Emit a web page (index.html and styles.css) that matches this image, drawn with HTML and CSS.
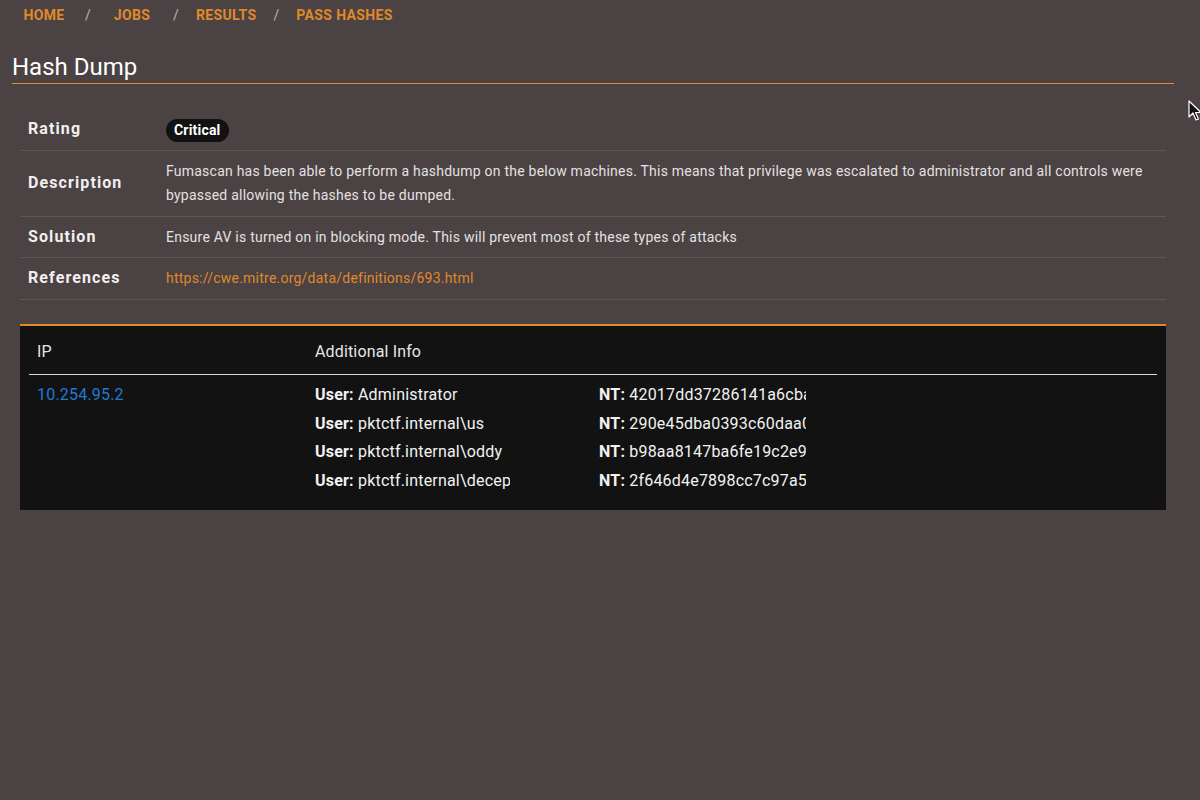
FILE: index.html
```html
<!DOCTYPE html>
<html lang="en">
<head>
    <meta charset="UTF-8">
    <title>Hash Dump - Results</title>
    <link rel="stylesheet" href="styles.css">
</head>
<body>
    <nav class="breadcrumbs">
        <a href="#" class="crumb">Home</a>
        <span class="sep">/</span>
        <a href="#" class="crumb">Jobs</a>
        <span class="sep">/</span>
        <a href="#" class="crumb">Results</a>
        <span class="sep">/</span>
        <a href="#" class="crumb">Pass Hashes</a>
    </nav>

    <div class="container">
        <h1 class="title">Hash Dump</h1>

        <!-- Finding details -->
        <table class="details">
            <tr>
                <th>Rating</th>
                <td><span class="badge">Critical</span></td>
            </tr>
            <tr>
                <th>Description</th>
                <td>Fumascan has been able to perform a hashdump on the below machines. This means that privilege was escalated to administrator and all controls were bypassed allowing the hashes to be dumped.</td>
            </tr>
            <tr>
                <th>Solution</th>
                <td>Ensure AV is turned on in blocking mode. This will prevent most of these types of attacks</td>
            </tr>
            <tr>
                <th>References</th>
                <td><a href="#" class="ref-link">https://cwe.mitre.org/data/definitions/693.html</a></td>
            </tr>
        </table>

        <!-- Affected hosts -->
        <div class="results">
            <table class="hosts">
                <thead>
                    <tr>
                        <th class="col-ip">IP</th>
                        <th>Additional Info</th>
                    </tr>
                </thead>
                <tbody>
                    <tr>
                        <td class="col-ip"><a href="#" class="ip-link">10.254.95.2</a></td>
                        <td>
                            <div class="hash-row">
                                <span class="user"><b>User:</b> Administrator</span>
                                <span class="nt"><b>NT:</b> 42017dd37286141a6cba</span>
                            </div>
                            <div class="hash-row">
                                <span class="user"><b>User:</b> pktctf.internal\us</span>
                                <span class="nt"><b>NT:</b> 290e45dba0393c60daa0</span>
                            </div>
                            <div class="hash-row">
                                <span class="user"><b>User:</b> pktctf.internal\oddy</span>
                                <span class="nt"><b>NT:</b> b98aa8147ba6fe19c2e9</span>
                            </div>
                            <div class="hash-row">
                                <span class="user"><b>User:</b> pktctf.internal\decep</span>
                                <span class="nt"><b>NT:</b> 2f646d4e7898cc7c97a5</span>
                            </div>
                        </td>
                    </tr>
                </tbody>
            </table>
        </div>
    </div>

    <svg class="cursor" width="14" height="22" viewBox="0 0 14 22">
        <path d="M1 1 L1 17 L5 13 L8 20 L10.5 19 L7.5 12.5 L13 12.5 Z" fill="#111" stroke="#fff" stroke-width="1.2" stroke-linejoin="round"/>
    </svg>
</body>
</html>
```

FILE: styles.css
```css
/* Basic styles */
*, *::before, *::after {
    box-sizing: border-box;
    margin: 0;
    padding: 0;
}

body {
    font-family: Roboto, "Liberation Sans", Arial, sans-serif;
    background-color: #4a4243;
    color: white;
    min-height: 100vh;
    overflow: hidden;
}

a {
    text-decoration: none;
}

.breadcrumbs {
    display: flex;
    align-items: center;
    height: 30px;
    padding-left: 12px;
    font-size: 14px;
    font-weight: 700;
    text-transform: uppercase;
}

.crumb {
    min-width: 64px;
    padding: 0 8px;
    text-align: center;
    color: #e0892a;
    letter-spacing: 0.35px;
}

.sep {
    width: 24px;
    text-align: center;
    color: #bdb6b6;
    font-weight: 400;
}

.container {
    padding: 0 26px 0 12px;
}

.title {
    font-size: 24px;
    font-weight: 400;
    line-height: 32px;
    padding-top: 21px;
    border-bottom: 1px solid #e08d35;
    margin-bottom: 25px;
}

/* Finding details table */
.details {
    width: calc(100% - 16px);
    margin: 0 8px;
    border-collapse: collapse;
}

.details th,
.details td {
    padding: 8px 8px 8.5px;
    line-height: 24px;
    border-bottom: 1px solid #5e5657;
    text-align: left;
    vertical-align: middle;
}

.details th {
    width: 138px;
    font-size: 16px;
    font-weight: 700;
    letter-spacing: 1.1px;
    color: #f2f0f0;
}

.details td {
    font-size: 14px;
    letter-spacing: 0.23px;
    color: #e4e1e1;
}

.badge {
    display: inline-block;
    vertical-align: middle;
    background-color: #121212;
    color: white;
    font-size: 14px;
    font-weight: 700;
    letter-spacing: 0.2px;
    line-height: 23px;
    padding: 0 8px;
    border-radius: 12px;
}

.ref-link {
    color: #e0892a;
}

/* Hosts table */
.results {
    margin: 24px 8px 0;
    background-color: #121212;
    border-top: 2px solid #e0892a;
    padding: 0 9px 15px;
}

.hosts {
    width: 100%;
    border-collapse: collapse;
}

.hosts th {
    font-size: 16px;
    font-weight: 400;
    letter-spacing: 0.15px;
    color: #e6e6e6;
    text-align: left;
    padding: 12px 8px 8px;
    line-height: 24px;
    border-bottom: 1px solid #d8d8d8;
}

.hosts td {
    font-size: 16px;
    letter-spacing: 0.2px;
    vertical-align: top;
    padding: 6px 8px 0;
}

.col-ip {
    width: 278px;
}

.hosts .col-ip {
    line-height: 28.5px;
}

.ip-link {
    color: #1f7bd2;
}

.hash-row {
    display: flex;
    line-height: 28.5px;
    color: #f2f2f2;
}

.user,
.nt {
    white-space: nowrap;
    overflow: hidden;
}

.user {
    width: 195px;
    margin-right: 89px;
}

.nt {
    width: 207px;
}

.cursor {
    position: absolute;
    top: 100px;
    left: 1188px;
}
```
